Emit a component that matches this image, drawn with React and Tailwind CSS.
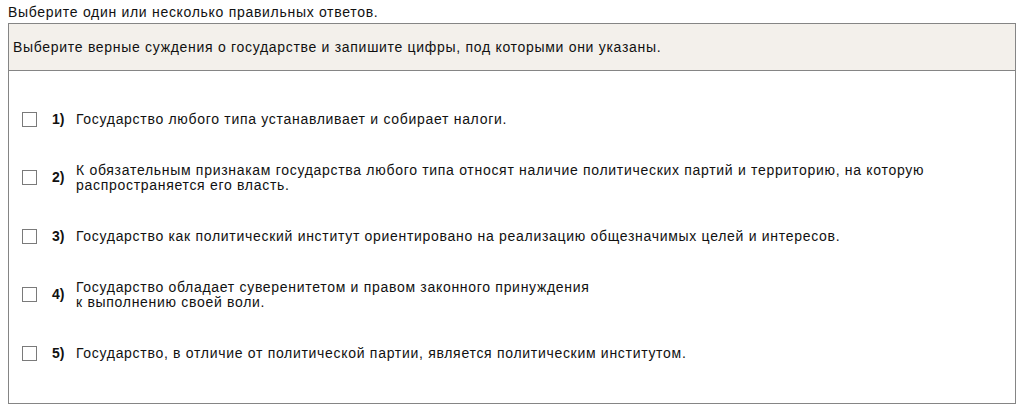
import React from 'react';

const options = [
  'Государство любого типа устанавливает и собирает налоги.',
  'К обязательным признакам государства любого типа относят наличие политических партий и территорию, на которую распространяется его власть.',
  'Государство как политический институт ориентировано на реализацию общезначимых целей и интересов.',
  'Государство обладает суверенитетом и правом законного принуждения\nк выполнению своей воли.',
  'Государство, в отличие от политической партии, является политическим институтом.',
];

const App = () => {
  return (
    <div className="w-[1024px] h-[412px] bg-white px-2 text-[#111] text-[14px] tracking-[0.7px] font-['Liberation_Sans',Arial,sans-serif]">
      <p className="pt-[2px] leading-[21px]">Выберите один или несколько правильных ответов.</p>

      <div className="border border-[#858585] bg-white">
        {/* Question header */}
        <div className="h-[47px] flex items-center px-[4px] bg-[#f3f0eb] border-b border-[#858585]">
          Выберите верные суждения о государстве и запишите цифры, под которыми они указаны.
        </div>

        {/* Options */}
        <div className="pt-[19px] pb-[20px]">
          {options.map((text, i) => (
            <label key={i} className="h-[58.5px] flex items-center pl-[13px] cursor-pointer">
              <span className="w-[15px] h-[15px] shrink-0 border border-[#7a7a7a] bg-white"></span>
              <span className="w-[24px] ml-[15px] shrink-0 font-bold tracking-normal">{i + 1})</span>
              <span className="max-w-[860px] leading-[15px] whitespace-pre-line">{text}</span>
            </label>
          ))}
        </div>
      </div>
    </div>
  );
};

export default App;
